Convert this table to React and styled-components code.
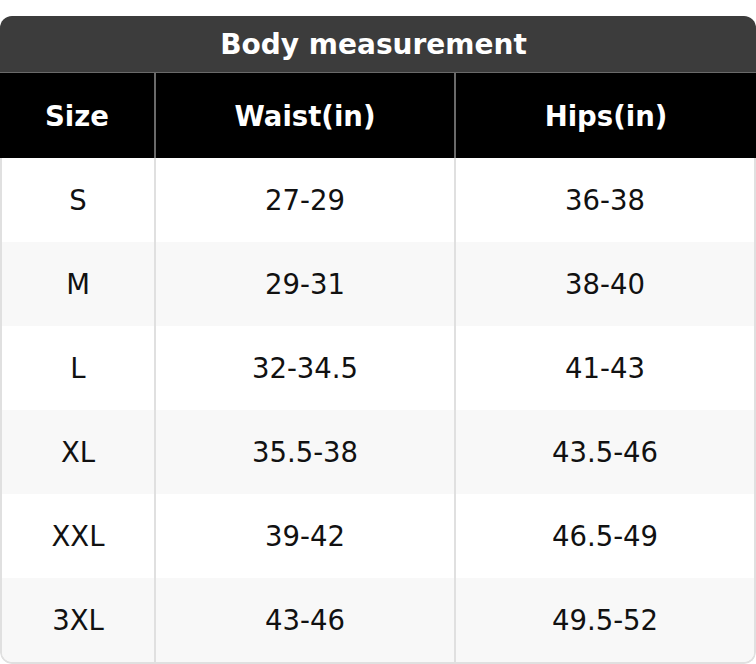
import React from "react";
import styled, { createGlobalStyle } from "styled-components";

const rows = [
  ["S", "27-29", "36-38"],
  ["M", "29-31", "38-40"],
  ["L", "32-34.5", "41-43"],
  ["XL", "35.5-38", "43.5-46"],
  ["XXL", "39-42", "46.5-49"],
  ["3XL", "43-46", "49.5-52"],
];

const App = () => {
  return (
    <>
      <GlobalStyle />
      <Page>
        <Table>
          <Title>Body measurement</Title>
          <HeadRow>
            <HeadCell>Size</HeadCell>
            <HeadCell divided>Waist(in)</HeadCell>
            <HeadCell divided>Hips(in)</HeadCell>
          </HeadRow>
          <Body>
            {rows.map((r, i) => (
              <Row key={r[0]} striped={i % 2 === 1}>
                <Cell>{r[0]}</Cell>
                <Cell divided>{r[1]}</Cell>
                <Cell divided>{r[2]}</Cell>
              </Row>
            ))}
          </Body>
        </Table>
      </Page>
    </>
  );
};

const GlobalStyle = createGlobalStyle`
  body {
    margin: 0;
    background: #fff;
    font-family: "DejaVu Sans", "Liberation Sans", sans-serif;
  }
`;

const Page = styled.div`
  padding-top: 16px;
  width: 756px;
`;

const Table = styled.div`
  width: 756px;
  border-radius: 12px;
  overflow: hidden;
`;

const Title = styled.div`
  height: 56px;
  padding-right: 9px;
  background: #3c3c3c;
  color: #fff;
  font-weight: bold;
  font-size: 28px;
  display: flex;
  align-items: center;
  justify-content: center;
  border-bottom: 1px solid #6a6a6a;
`;

const HeadRow = styled.div`
  display: grid;
  grid-template-columns: 154px 300px 1fr;
  height: 85px;
  background: #000;
`;

const HeadCell = styled.div.withConfig({
  shouldForwardProp: (p) => p !== "divided",
})`
  display: flex;
  align-items: center;
  justify-content: center;
  font-size: 27.5px;
  font-weight: bold;
  color: #fff;
  border-left: ${(p) => (p.divided ? "2px solid #6a6a6a" : "none")};
`;

const Body = styled.div`
  border: 2px solid #e0e0e0;
  border-top: none;
  border-radius: 0 0 12px 12px;
  overflow: hidden;
`;

const Row = styled.div.withConfig({
  shouldForwardProp: (p) => p !== "striped",
})`
  display: grid;
  grid-template-columns: 152px 300px 1fr;
  height: 84px;
  background: ${(p) => (p.striped ? "#f8f8f8" : "#fff")};
`;

const Cell = styled.div.withConfig({
  shouldForwardProp: (p) => p !== "divided",
})`
  display: flex;
  align-items: center;
  justify-content: center;
  font-size: 27.5px;
  color: #111;
  border-left: ${(p) => (p.divided ? "2px solid #e0e0e0" : "none")};
`;

export default App;
